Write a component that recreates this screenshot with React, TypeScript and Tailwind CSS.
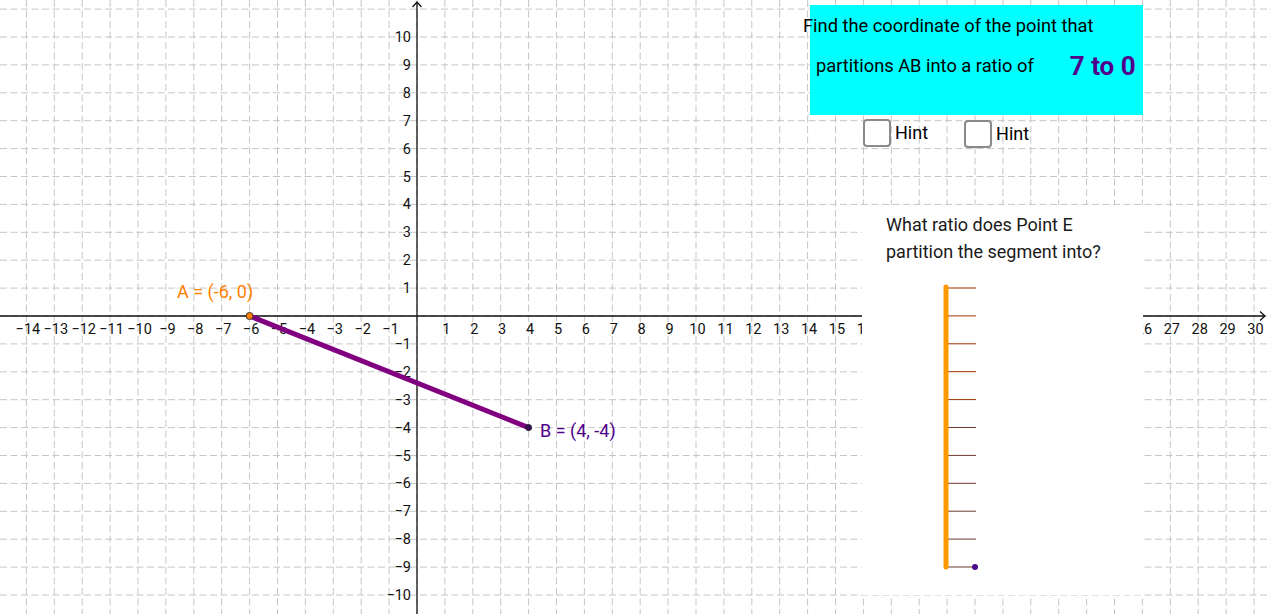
import React from 'react';

const U = 27.9;
const OX = 417;
const OY = 316;

const xs = Array.from({ length: 45 }, (_, i) => i - 14); // -14 .. 30
const ys = Array.from({ length: 22 }, (_, i) => i - 10); // -10 .. 11

const fmt = (n: number) => (n < 0 ? '\u2212' + Math.abs(n) : String(n));

const Graph: React.FC = () => {
  const ax = OX + -6 * U;
  const ay = OY;
  const bx = OX + 4 * U;
  const by = OY + 4 * U;

  return (
    <svg className="absolute inset-0" width={1271} height={614} viewBox="0 0 1271 614">
      {/* grid */}
      <g stroke="#c6c6c6" strokeWidth={1} strokeDasharray="7 3.5">
        {xs.map((i) => (
          <line key={'gx' + i} x1={OX + i * U} y1={0} x2={OX + i * U} y2={614} />
        ))}
        {ys.map((j) => (
          <line key={'gy' + j} x1={0} y1={OY - j * U} x2={1271} y2={OY - j * U} />
        ))}
      </g>

      {/* axes */}
      <g stroke="#111" strokeWidth={1.3} fill="none">
        <line x1={0} y1={OY} x2={1265} y2={OY} />
        <polyline points={`1260,${OY - 4.5} 1265,${OY} 1260,${OY + 4.5}`} />
        <line x1={OX} y1={614} x2={OX} y2={2} />
        <polyline points={`${OX - 4.5},7 ${OX},2 ${OX + 4.5},7`} />
      </g>

      {/* axis labels */}
      <g fill="#111" fontSize={14.5}>
        {xs
          .filter((i) => i !== 0)
          .map((i) => (
            <text key={'lx' + i} x={OX + i * U + 1.5} y={334} textAnchor="middle">
              {fmt(i)}
            </text>
          ))}
        {ys
          .filter((j) => j !== 0 && j <= 10)
          .map((j) => (
            <text key={'ly' + j} x={411} y={OY - j * U + 5} textAnchor="end">
              {fmt(j)}
            </text>
          ))}
      </g>

      {/* segment AB */}
      <line x1={ax} y1={ay} x2={bx} y2={by} stroke="#800080" strokeWidth={5} />
      <circle cx={ax} cy={ay} r={3.5} fill="#ff8000" stroke="#333" strokeWidth={1} />
      <circle cx={bx} cy={by} r={3} fill="#3a0a5c" stroke="#222" strokeWidth={1} />

      <text x={177} y={298} fill="#ff7f00" fontSize={18}>
        A = (-6, 0)
      </text>
      <text x={540} y={437} fill="#50008c" fontSize={18}>
        B = (4, -4)
      </text>
    </svg>
  );
};

const Checkbox: React.FC<{ label: string }> = ({ label }) => (
  <label className="flex items-center gap-[4px]">
    <span className="w-[28px] h-[28px] rounded-[4px] border-2 border-[#8a8a8a] bg-white" />
    <span className="text-[18px] text-black leading-none">{label}</span>
  </label>
);

const RatioPanel: React.FC = () => {
  const ticks = Array.from({ length: 11 }, (_, k) => 8 + k * U);
  return (
    <div className="absolute left-[862px] top-[205px] w-[281px] h-[390px] bg-white">
      <div className="pl-[24px] pt-[6px] text-[18px] leading-[27px] text-[#1a1a1a]">
        <div>What ratio does Point E</div>
        <div>partition the segment into?</div>
      </div>
      <svg className="block mt-[15px]" width={281} height={300} viewBox="0 0 281 300">
        {ticks.map((y, k) => (
          <line key={k} x1={86} y1={y} x2={114} y2={y} stroke={k < 5 ? '#993300' : '#6b3a2a'} strokeWidth={1} />
        ))}
        <line x1={84} y1={7} x2={84} y2={287} stroke="#ff9900" strokeWidth={5} strokeLinecap="round" />
        <circle cx={113} cy={ticks[10]} r={3} fill="#4b0a8c" />
      </svg>
    </div>
  );
};

export default function App() {
  return (
    <div className="relative w-[1271px] h-[614px] bg-white overflow-hidden font-['Roboto',sans-serif]">
      <Graph />

      {/* question box */}
      <div className="absolute left-[810px] top-[5px] w-[333px] h-[110px] bg-[#00ffff]">
        <div className="-ml-[7px] mt-[10px] text-[18.3px] leading-[22px] text-black whitespace-nowrap">
          Find the coordinate of the point that
        </div>
        <div className="mt-[16px] flex items-center h-[26px] whitespace-nowrap">
          <span className="ml-[6px] text-[18.3px] text-black">partitions AB into a ratio of</span>
          <span className="ml-[36px] text-[26px] font-bold text-[#50008c] leading-none">7 to 0</span>
        </div>
      </div>

      {/* hint toggles */}
      <div className="absolute left-[863px] top-[119px] flex items-start gap-[36px]">
        <Checkbox label="Hint" />
        <div className="mt-[1px]">
          <Checkbox label="Hint" />
        </div>
      </div>

      <RatioPanel />
    </div>
  );
}
